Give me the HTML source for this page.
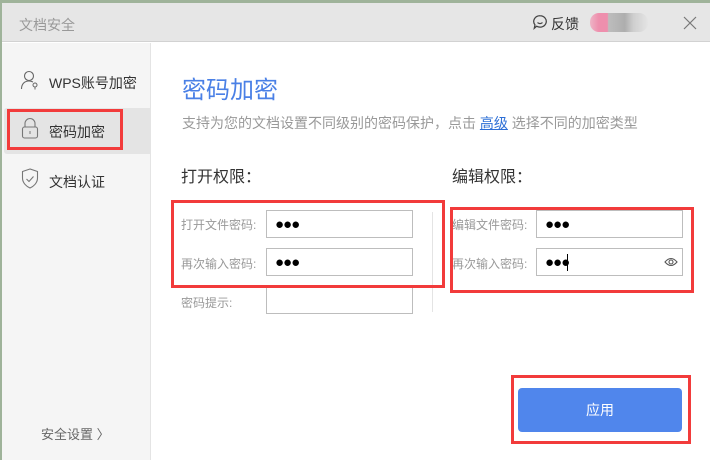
<!DOCTYPE html>
<html><head><meta charset="utf-8"><style>
*{margin:0;padding:0;box-sizing:border-box}
body{width:710px;height:460px;position:relative;overflow:hidden;background:#fff;font-family:"Liberation Sans","Noto Sans CJK SC",sans-serif}
.a{position:absolute}
.lbl{font-size:12px;color:#999;position:absolute}
.inp{position:absolute;border:1px solid #bdbdbd;background:#fff;height:28px}
.dots{position:absolute;left:8px;top:5px;font-size:15px;color:#000;letter-spacing:-1px}
.red{position:absolute;border:3px solid #f23b3b}
</style></head><body>
<div class="a" style="left:0;top:0;width:710px;height:3px;background:#9fb39a"></div>
<div class="a" style="left:0;top:3px;width:2px;height:457px;background:#9fb39a"></div>
<div class="a" style="left:2px;top:3px;width:708px;height:39px;background:#e6e6e6;border-bottom:1px solid #d2d2d2"></div>
<div class="a" style="left:19px;top:15px;font-size:14px;color:#999">文档安全</div>
<svg class="a" style="left:532px;top:14px" width="16" height="16" viewBox="0 0 14 14"><path d="M7 1.5a5.5 5 0 1 1-3 9.2L2 12.5l.6-3A5.3 5 0 0 1 7 1.5z" fill="none" stroke="#444" stroke-width="1.1"/><path d="M4.8 7.5q2.2 1.8 4.4 0" fill="none" stroke="#444" stroke-width="1.1"/></svg>
<div class="a" style="left:551px;top:14px;font-size:14px;color:#333">反馈</div>
<div class="a" style="left:590px;top:13px;width:58px;height:19px;border-radius:9px;background:linear-gradient(90deg,#eeb4c6 0,#ee8fad 15%,#ee8fad 30%,#bdbdbd 32%,#aeaeae 60%,#cfcfcf 75%,#e4e4e4 100%)"></div>
<svg class="a" style="left:683px;top:16px" width="14" height="14"><path d="M1 1L13 13M13 1L1 13" stroke="#777" stroke-width="1.2"/></svg>
<div class="a" style="left:2px;top:43px;width:149px;height:417px;background:#f5f5f5;border-right:1px solid #e4e4e4"></div>
<div class="a" style="left:4px;top:108px;width:147px;height:46px;background:#e4e4e4;border-radius:3px 0 0 3px"></div>
<svg class="a" style="left:20px;top:70px" width="20" height="20" viewBox="0 0 20 20"><circle cx="9" cy="6" r="4.5" fill="none" stroke="#666" stroke-width="1.1"/><path d="M1.5 19c0-5 3-8 7.5-8 2 0 3 .5 4 1" fill="none" stroke="#666" stroke-width="1.1"/><circle cx="15" cy="15" r="2" fill="none" stroke="#666"/><path d="M15 17v2.5" stroke="#666"/></svg>
<div class="a" style="left:49px;top:73px;font-size:14px;color:#333">WPS账号加密</div>
<svg class="a" style="left:21px;top:117px" width="18" height="22" viewBox="0 0 18 22"><path d="M4 10V6.5a5 5 0 0 1 10 0V10" fill="none" stroke="#777" stroke-width="1.1"/><rect x="1.5" y="10" width="15" height="11" rx="2" fill="none" stroke="#777" stroke-width="1.1"/><path d="M9 14v3" stroke="#777"/></svg>
<div class="a" style="left:49px;top:122px;font-size:14px;color:#333">密码加密</div>
<div class="red" style="left:7px;top:109px;width:116px;height:41px"></div>
<svg class="a" style="left:21px;top:168px" width="18" height="21" viewBox="0 0 18 21"><path d="M9 1L1.5 3.5V10c0 5 4 8.5 7.5 10 3.5-1.5 7.5-5 7.5-10V3.5z" fill="none" stroke="#777" stroke-width="1.1"/><path d="M5.5 11l2.5 2.5 4.5-5" fill="none" stroke="#777" stroke-width="1.1"/></svg>
<div class="a" style="left:49px;top:172px;font-size:14px;color:#333">文档认证</div>
<div class="a" style="left:41px;top:424px;font-size:13px;color:#666">安全设置 〉</div>
<div class="a" style="left:182px;top:70px;font-size:24px;color:#4a80e6">密码加密</div>
<div class="a" style="left:182px;top:113px;font-size:14px;color:#999">支持为您的文档设置不同级别的密码保护，点击 <span style="color:#2d6fd6;text-decoration:underline">高级</span> 选择不同的加密类型</div>
<div class="a" style="left:181px;top:163px;font-size:16px;color:#333">打开权限：</div>
<div class="a" style="left:452px;top:163px;font-size:16px;color:#333">编辑权限：</div>
<div class="lbl" style="left:181px;top:216px">打开文件密码:</div>
<div class="inp" style="left:266px;top:210px;width:147px"><span class="dots">●●●</span></div>
<div class="lbl" style="left:181px;top:255px">再次输入密码:</div>
<div class="inp" style="left:266px;top:248px;width:147px"><span class="dots">●●●</span></div>
<div class="lbl" style="left:181px;top:294px">密码提示:</div>
<div class="inp" style="left:266px;top:286px;width:147px"></div>
<div class="a" style="left:432px;top:212px;width:1px;height:100px;background:#e4e4e4"></div>
<div class="lbl" style="left:452px;top:216px">编辑文件密码:</div>
<div class="inp" style="left:536px;top:210px;width:147px"><span class="dots">●●●</span></div>
<div class="lbl" style="left:452px;top:255px">再次输入密码:</div>
<div class="inp" style="left:536px;top:248px;width:147px"><span class="dots">●●●</span><span class="a" style="left:30px;top:5px;width:1px;height:17px;background:#000"></span>
<svg class="a" style="left:127px;top:8px" width="14" height="10" viewBox="0 0 14 10"><path d="M1 5q6-7 12 0q-6 7-12 0z" fill="none" stroke="#555" stroke-width="1.1"/><circle cx="7" cy="5" r="2" fill="none" stroke="#555" stroke-width="1.1"/></svg></div>
<div class="red" style="left:171px;top:200px;width:274px;height:88px"></div>
<div class="red" style="left:450px;top:207px;width:244px;height:86px"></div>
<div class="a" style="left:518px;top:388px;width:164px;height:44px;background:#5086ec;border-radius:4px;color:#fff;font-size:14px;text-align:center;line-height:44px">应用</div>
<div class="red" style="left:511px;top:375px;width:180px;height:69px"></div>
</body></html>
